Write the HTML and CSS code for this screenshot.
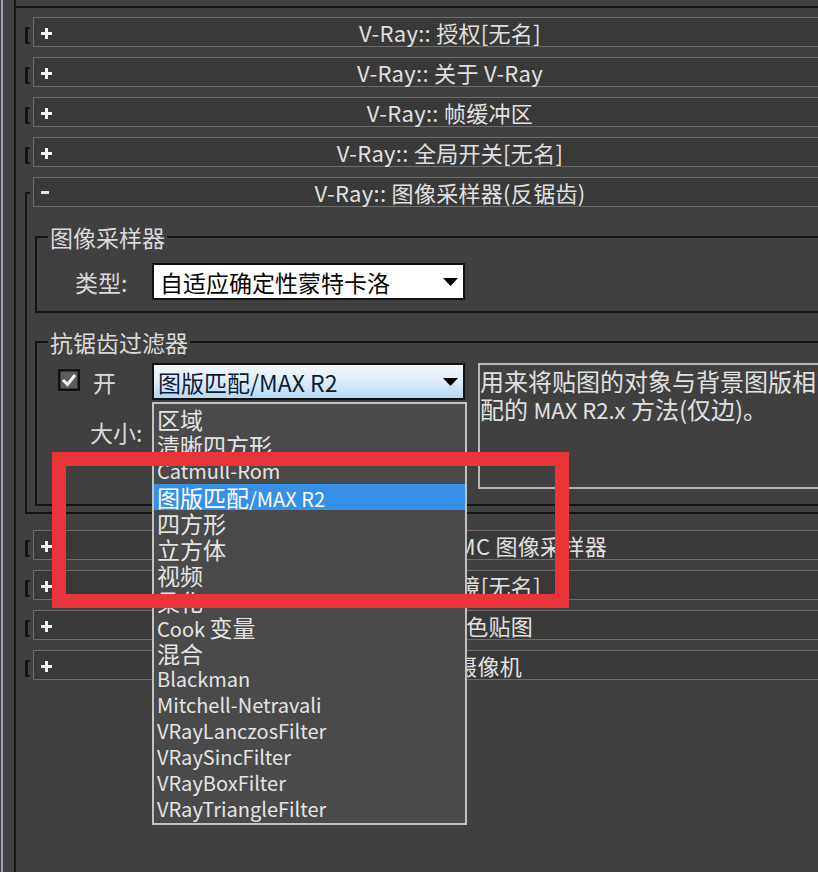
FILE: index.html
```html
<!DOCTYPE html>
<html lang="zh-CN">
<head>
<meta charset="utf-8">
<title>V-Ray 图像采样器(反锯齿)</title>
<link rel="stylesheet" href="styles.css">
</head>
<body>
<div class="app">
  <div class="edge"></div>
  <div class="panel">
    <div class="panel-top"></div>
    <div class="rollouts">
      <div class="rollout">
        <span class="bracket"></span>
        <div class="rh"><span class="sign"><svg class="plus" width="11" height="11" viewBox="0 0 11 11"><path d="M5.5 0V11M0 5.5H11" stroke="#f4f4f4" stroke-width="3"/></svg></span><span class="title">V-Ray:: 授权[无名]</span></div>
      </div>
      <div class="rollout">
        <span class="bracket"></span>
        <div class="rh"><span class="sign"><svg class="plus" width="11" height="11" viewBox="0 0 11 11"><path d="M5.5 0V11M0 5.5H11" stroke="#f4f4f4" stroke-width="3"/></svg></span><span class="title">V-Ray:: 关于 V-Ray</span></div>
      </div>
      <div class="rollout">
        <span class="bracket"></span>
        <div class="rh"><span class="sign"><svg class="plus" width="11" height="11" viewBox="0 0 11 11"><path d="M5.5 0V11M0 5.5H11" stroke="#f4f4f4" stroke-width="3"/></svg></span><span class="title">V-Ray:: 帧缓冲区</span></div>
      </div>
      <div class="rollout">
        <span class="bracket"></span>
        <div class="rh"><span class="sign"><svg class="plus" width="11" height="11" viewBox="0 0 11 11"><path d="M5.5 0V11M0 5.5H11" stroke="#f4f4f4" stroke-width="3"/></svg></span><span class="title">V-Ray:: 全局开关[无名]</span></div>
      </div>
      <div class="rollout open">
        <span class="bracket-open"></span>
        <div class="rh"><span class="sign"><span class="minus"></span></span><span class="title">V-Ray:: 图像采样器(反锯齿)</span></div>
      </div>
      <div class="open-body">
        <fieldset class="group g1">
          <legend>图像采样器</legend>
          <div class="type-row">
            <span class="type-label">类型:</span>
            <div class="select white"><span>自适应确定性蒙特卡洛</span><svg class="arrow" width="15" height="8" viewBox="0 0 15 8"><path d="M0 0H15L7.5 8Z" fill="#000"/></svg></div>
          </div>
        </fieldset>
        <fieldset class="group g2">
          <legend>抗锯齿过滤器</legend>
          <div class="filter">
            <div class="filter-left">
              <div class="check-row">
                <svg class="checkbox" width="22" height="22" viewBox="0 0 22 22"><rect x="1.25" y="1.25" width="19.5" height="19.5" fill="#5c5c5c" stroke="#121212" stroke-width="2.5"/><path d="M5 11L9.5 15.5L17 6" fill="none" stroke="#f2f2f2" stroke-width="3"/></svg>
                <span class="on">开</span>
              </div>
              <span class="size-label">大小:</span>
            </div>
            <div class="select-wrap">
              <div class="select blue"><span>图版匹配/MAX R2</span><svg class="arrow" width="15" height="8" viewBox="0 0 15 8"><path d="M0 0H15L7.5 8Z" fill="#000"/></svg></div>
              <ul class="dropdown">
                <li><span class="c">区域</span></li>
                <li><span class="c">清晰四方形</span></li>
                <li>Catmull-Rom</li>
                <li class="hl"><span class="c">图版匹配</span>/MAX R2</li>
                <li><span class="c">四方形</span></li>
                <li><span class="c">立方体</span></li>
                <li><span class="c">视频</span></li>
                <li><span class="c">柔化</span></li>
                <li>Cook <span class="c">变量</span></li>
                <li><span class="c">混合</span></li>
                <li>Blackman</li>
                <li>Mitchell-Netravali</li>
                <li>VRayLanczosFilter</li>
                <li>VRaySincFilter</li>
                <li>VRayBoxFilter</li>
                <li>VRayTriangleFilter</li>
              </ul>
            </div>
            <div class="desc">用来将贴图的对象与背景图版相匹<br>配的 <span class="lat">MAX R2.x</span> 方法(仅边)。</div>
          </div>
        </fieldset>
      </div>
      <div class="rollout">
        <span class="bracket"></span>
        <div class="rh"><span class="sign"><svg class="plus" width="11" height="11" viewBox="0 0 11 11"><path d="M5.5 0V11M0 5.5H11" stroke="#f4f4f4" stroke-width="3"/></svg></span><span class="title">V-Ray:: 自适应 DMC 图像采样器</span></div>
      </div>
      <div class="rollout">
        <span class="bracket"></span>
        <div class="rh"><span class="sign"><svg class="plus" width="11" height="11" viewBox="0 0 11 11"><path d="M5.5 0V11M0 5.5H11" stroke="#f4f4f4" stroke-width="3"/></svg></span><span class="title">V-Ray:: 环境[无名]</span></div>
      </div>
      <div class="rollout">
        <span class="bracket"></span>
        <div class="rh"><span class="sign"><svg class="plus" width="11" height="11" viewBox="0 0 11 11"><path d="M5.5 0V11M0 5.5H11" stroke="#f4f4f4" stroke-width="3"/></svg></span><span class="title">V-Ray:: 颜色贴图</span></div>
      </div>
      <div class="rollout">
        <span class="bracket"></span>
        <div class="rh"><span class="sign"><svg class="plus" width="11" height="11" viewBox="0 0 11 11"><path d="M5.5 0V11M0 5.5H11" stroke="#f4f4f4" stroke-width="3"/></svg></span><span class="title">V-Ray:: 摄像机</span></div>
      </div>
    </div>
  </div>
</div>
<div class="annot"></div>
</body>
</html>
```
FILE: styles.css
```css
html, body {
  margin: 0;
  width: 818px;
  height: 872px;
  overflow: hidden;
  background: #404040;
}
body {
  position: relative;
  font-family: "Noto Sans CJK SC", "Noto Sans", sans-serif;
  color: #d9d9d9;
}
.app {
  display: flex;
  height: 872px;
}
.edge {
  flex: none;
  width: 11px;
  margin-left: 1px;
  border-left: 2px solid #9ba6b4;
}
.panel {
  flex: 1;
  min-width: 0;
  border-left: 2px solid #161616;
}
.panel-top {
  height: 6px;
  border-bottom: 2px solid #161616;
}
.rollouts {
  padding: 9px 0 0 9px;
}
.rollout {
  display: flex;
  align-items: flex-start;
  height: 30px;
  margin-bottom: 10px;
}
.rollout.open {
  margin-bottom: 0;
}
.bracket {
  flex: none;
  box-sizing: border-box;
  width: 5px;
  height: 17px;
  margin: 10px 3px 0 0;
  border: 2px solid #141414;
  border-right: 0;
  border-left-width: 3px;
}
.bracket-open {
  flex: none;
  box-sizing: border-box;
  width: 5px;
  height: 15px;
  margin: 15px 3px 0 0;
  border-left: 2px solid #141414;
  border-top: 2px solid #141414;
}
.rh {
  flex: none;
  box-sizing: border-box;
  width: 834px;
  height: 30px;
  border: 1px solid #6c6c6c;
  background: #393939;
  display: grid;
  grid-template-columns: 40px 1fr 40px;
  align-items: center;
}
.sign {
  display: flex;
  align-items: center;
  padding-left: 7px;
}
.plus {
  display: block;
  margin-top: 2px;
}
.minus {
  display: block;
  width: 8px;
  height: 3px;
  background: #dedede;
}
.title {
  text-align: center;
  white-space: nowrap;
  font-size: 22px;
  line-height: 28px;
  color: #e0e0e0;
  letter-spacing: 0.3px;
}
.open-body {
  border-left: 2px solid #141414;
  border-bottom: 2px solid #141414;
  padding: 16px 0 6px 8px;
  margin-bottom: 16px;
}
.group {
  margin: 0;
  padding: 0;
  min-width: 0;
  border: 2px solid #141414;
  border-right: 0;
}
.group legend {
  margin-left: 11px;
  padding: 0 2px;
  font-size: 23px;
  line-height: 28px;
  color: #d9d9d9;
}
.g2 {
  margin-top: 15px;
}
.type-row {
  display: flex;
  align-items: center;
  padding: 12px 0 11px;
}
.type-label {
  flex: none;
  box-sizing: border-box;
  width: 115px;
  padding-left: 38px;
  font-size: 23px;
  line-height: 28px;
}
.select {
  box-sizing: border-box;
  width: 313px;
  height: 37px;
  border: 2px solid #101010;
  display: flex;
  align-items: center;
  justify-content: space-between;
  font-size: 23px;
  line-height: 30px;
  white-space: nowrap;
}
.select.white {
  background: #ffffff;
  color: #050505;
  padding: 0 5px 0 6px;
}
.select.blue {
  background: linear-gradient(#f2f7fc, #e2eef9 45%, #b4d7f3);
  color: #0c1b38;
  padding: 0 5px 0 4px;
}
.arrow {
  display: block;
  flex: none;
}
.filter {
  display: grid;
  grid-template-columns: 115px 313px auto;
  align-items: start;
  padding: 7px 0 15px;
}
.filter-left {
  display: flex;
  flex-direction: column;
}
.check-row {
  display: flex;
  align-items: center;
  height: 37px;
  padding-left: 21px;
}
.checkbox {
  display: block;
  margin-top: -4px;
}
.on {
  margin-left: 13px;
  font-size: 23px;
  line-height: 28px;
}
.size-label {
  margin-top: 18px;
  padding-left: 53px;
  font-size: 23px;
  line-height: 28px;
}
.select-wrap {
  position: relative;
}
.dropdown {
  position: absolute;
  top: 39px;
  left: 0;
  z-index: 5;
  box-sizing: border-box;
  width: 315px;
  height: 423px;
  margin: 0;
  padding: 2px 0 0;
  list-style: none;
  background: #4a4a4a;
  border: 2px solid #c2c2c2;
}
.dropdown li {
  height: 26px;
  line-height: 26px;
  padding-left: 3px;
  font-size: 20px;
  color: #e4e4e4;
  white-space: nowrap;
  overflow: hidden;
}
.dropdown li .c {
  font-size: 23px;
}
.dropdown li.hl {
  background: #3690e8;
  color: #ffffff;
}
.desc {
  box-sizing: border-box;
  width: 400px;
  height: 126px;
  margin-left: 13px;
  border: 2px solid #b6b6b6;
  padding-top: 2px;
  font-size: 24px;
  line-height: 28px;
  color: #e0e0e0;
  white-space: nowrap;
}
.desc .lat {
  font-size: 22px;
}
.annot {
  position: absolute;
  left: 52px;
  top: 452px;
  z-index: 10;
  box-sizing: border-box;
  width: 517px;
  height: 156px;
  border: 14px solid #e8353a;
}
```
